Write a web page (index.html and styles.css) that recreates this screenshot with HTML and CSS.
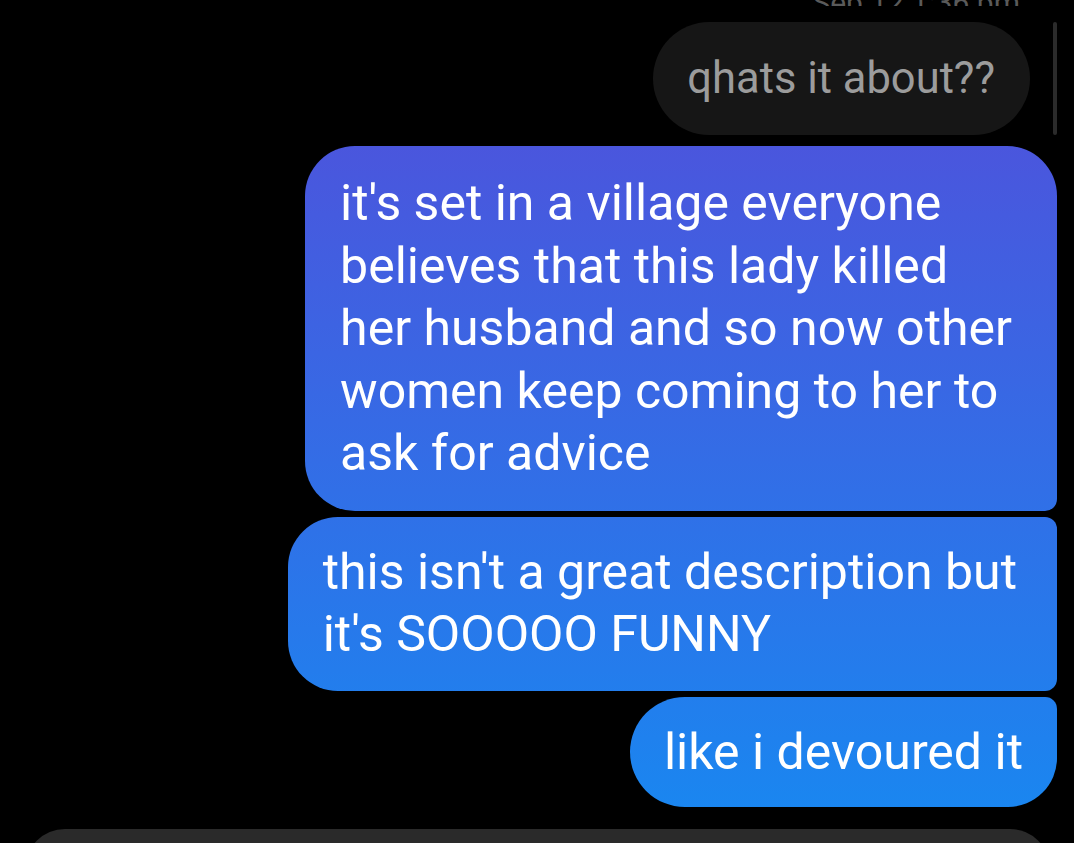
FILE: index.html
```html
<!DOCTYPE html>
<html lang="en">
<head>
    <meta charset="utf-8">
    <meta name="viewport" content="width=device-width, initial-scale=1">
    <title>Messages</title>
    <link rel="stylesheet" href="styles.css">
</head>
<body>
    <div class="thread">
        <div class="status"><span>Sep 12 1:36 pm</span></div>
        <div class="row row-gray">
            <div class="bubble gray">qhats it about??</div>
        </div>
        <div class="row">
            <div class="bubble blue first">it's set in a village everyone<br>believes that this lady killed<br>her husband and so now other<br>women keep coming to her to<br>ask for advice</div>
        </div>
        <div class="row">
            <div class="bubble blue middle">this isn't a great description but<br>it's SOOOOO FUNNY</div>
        </div>
        <div class="row">
            <div class="bubble blue last">like i devoured it</div>
        </div>
        <div class="scrollbar"></div>
    </div>
    <div class="composer"></div>
</body>
</html>
```

FILE: styles.css
```css
body{
    margin: 0;
    padding: 0;
    background-color: #000;
    font-family: Roboto, "Noto Sans", Arial, sans-serif;
    overflow: hidden;
    height: 843px;
}
.thread{
    position: relative;
    display: flex;
    flex-direction: column;
    align-items: flex-end;
    padding-right: 17px;
}
.status{
    height: 6px;
    overflow: hidden;
    display: flex;
    align-items: flex-end;
    margin-right: 37px;
    margin-bottom: 16px;
}
.status span{
    font-size: 30px;
    line-height: 6px;
    color: #5a5a5a;
    white-space: nowrap;
}
.row{
    display: flex;
    justify-content: flex-end;
    margin-top: 6px;
}
.row-gray{
    margin-top: 0;
    margin-right: 27px;
    margin-bottom: 5px;
}
.bubble{
    box-sizing: border-box;
    white-space: nowrap;
}
.gray{
    background-color: #161616;
    color: #9c9c9c;
    font-size: 43.5px;
    line-height: 63px;
    padding: 25px 35px 25px 34px;
    border-radius: 57px;
}
.blue{
    color: #fff;
    font-size: 50px;
    line-height: 62.5px;
    background-image: linear-gradient(to bottom, #4a56dd 146px, #1a86f0 807px);
    background-attachment: fixed;
}
.first{
    padding: 26px 45px 26px 35px;
    border-radius: 50px 50px 12px 50px;
}
.middle{
    padding: 24px 40px 25px 35px;
    border-radius: 50px 12px 12px 50px;
}
.last{
    padding: 24px 34px 24px 34px;
    border-radius: 56px 12px 50px 56px;
}
.scrollbar{
    position: absolute;
    top: 22px;
    right: 17px;
    width: 4px;
    height: 113px;
    border-radius: 2px;
    background-color: #2b2b2b;
}
.composer{
    margin: 22px 24px 0 25px;
    height: 80px;
    border-radius: 40px;
    background-color: #2a2a2a;
}
```
